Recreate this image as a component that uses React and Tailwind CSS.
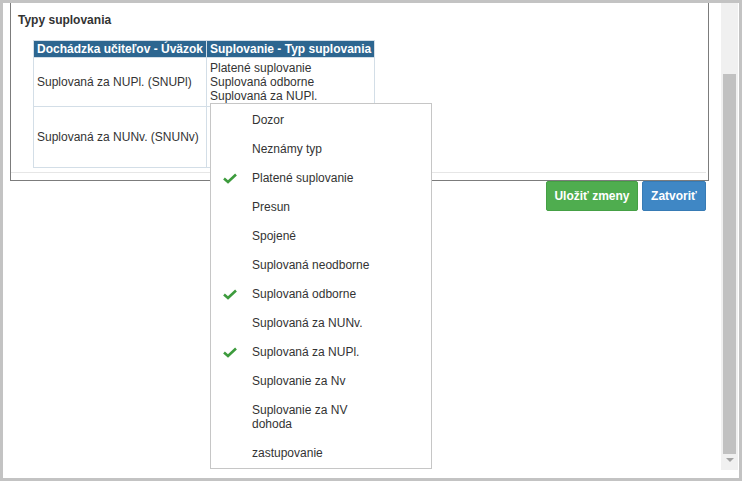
import React from 'react'

const options = [
  { label: 'Dozor' },
  { label: 'Neznámy typ' },
  { label: 'Platené suplovanie', checked: true },
  { label: 'Presun' },
  { label: 'Spojené' },
  { label: 'Suplovaná neodborne' },
  { label: 'Suplovaná odborne', checked: true },
  { label: 'Suplovaná za NUNv.' },
  { label: 'Suplovaná za NUPl.', checked: true },
  { label: 'Suplovanie za Nv' },
  { label: 'Suplovanie za NV dohoda' },
  { label: 'zastupovanie' },
]

const Check = () => (
  <svg width="14" height="11" viewBox="0 0 14 11" className="shrink-0">
    <path d="M1 5.5 L5 9 L13 1.5" fill="none" stroke="#3d9b3d" strokeWidth="2.6" strokeLinejoin="miter" />
  </svg>
)

const App = () => {
  return (
    <div className="w-[742px] h-[481px] border-[3px] border-[#c3c3c3] bg-white flex relative overflow-hidden text-[12px] text-[#333] font-['Liberation_Sans',Arial,sans-serif]">
      <div className="flex-1 flex flex-col">
        {/* fieldset, top cut off by scroll */}
        <div className="ml-[7px] w-[699px] h-[178px] border border-t-0 border-[#7c7c7c] flex flex-col">
          <div className="pl-[7px] pt-[10px] leading-[14px] font-bold text-[#333]">Typy suplovania</div>
          <table className="ml-[22px] mt-[13px] border-collapse w-[341px] leading-[14px]">
            <thead>
              <tr className="bg-[#2d6690] text-white font-bold h-[17px]">
                <th className="w-[173px] px-[3px] text-left font-bold border border-[#d3dee7] whitespace-nowrap">Dochádzka učiteľov - Úväzok</th>
                <th className="w-[168px] px-[3px] text-left font-bold border border-[#d3dee7] whitespace-nowrap">Suplovanie - Typ suplovania</th>
              </tr>
            </thead>
            <tbody className="text-[#333]">
              <tr className="h-[48px]">
                <td className="px-[3px] border border-[#d3dee7] align-middle">Suplovaná za NUPl. (SNUPl)</td>
                <td className="px-[3px] py-[3px] border border-[#d3dee7] align-top">
                  <div>Platené suplovanie</div>
                  <div>Suplovaná odborne</div>
                  <div>Suplovaná za NUPl.</div>
                </td>
              </tr>
              <tr className="h-[61px]">
                <td className="px-[3px] border border-[#d3dee7] align-middle">Suplovaná za NUNv. (SNUNv)</td>
                <td className="px-[3px] border border-[#d3dee7]"></td>
              </tr>
            </tbody>
          </table>
          <div className="mt-auto mb-[7px] mr-[2px] border-t border-[#e6e6e6]" />
        </div>

        <div className="flex justify-end gap-[4px] mr-[15px]">
          <button className="w-[92px] h-[30px] rounded-[2px] bg-[#4fad4f] border border-[#45a045] text-white font-bold leading-none">Uložiť zmeny</button>
          <button className="w-[64px] h-[30px] rounded-[2px] bg-[#3f87c5] border border-[#377bb5] text-white font-bold leading-none">Zatvoriť</button>
        </div>
      </div>

      {/* scrollbar */}
      <div className="w-[17px] h-[467px] bg-[#f0f0f0] mr-[1px] flex flex-col items-center">
        <div className="mt-[71px] w-[13px] h-[380px] bg-[#c1c1c1]" />
        <div className="mt-[4px] w-0 h-0 border-l-[4px] border-r-[4px] border-t-[4px] border-l-transparent border-r-transparent border-t-[#a3a3a3]" />
      </div>

      {/* dropdown */}
      <div className="absolute left-[207px] top-[100px] w-[222px] h-[366px] bg-white border border-[#c6c6c6] pt-px">
        {options.map((o) => (
          <div key={o.label} className="flex items-start py-[7.5px] leading-[14px] text-[#333]">
            <div className="w-[41px] flex justify-end pr-[15px] pt-[2px]">
              {o.checked && <Check />}
            </div>
            <div className="w-[132px]">{o.label}</div>
          </div>
        ))}
      </div>
    </div>
  )
}

export default App
